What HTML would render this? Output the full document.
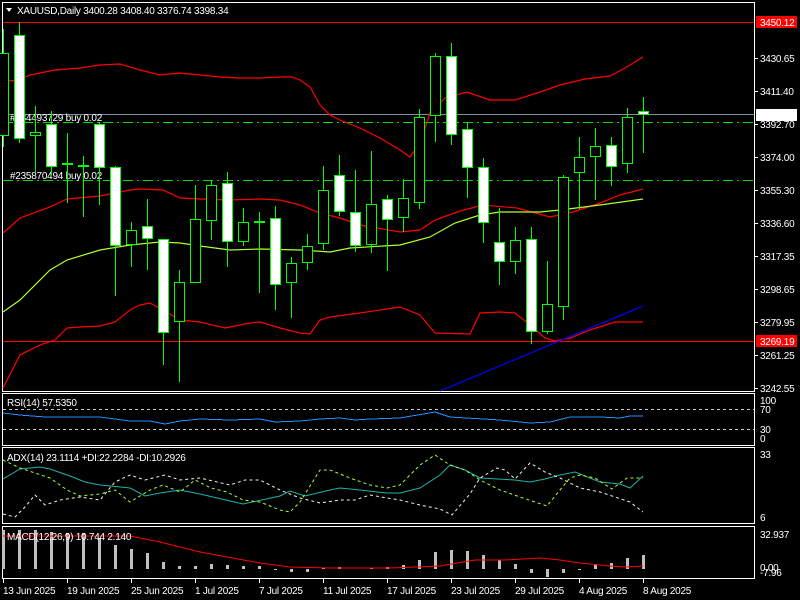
<!DOCTYPE html>
<html><head><meta charset="utf-8"><style>
html,body{margin:0;padding:0;background:#000;width:800px;height:600px;overflow:hidden}
svg{display:block}
text{font-family:"Liberation Sans",sans-serif;font-size:10px;letter-spacing:-0.25px;fill:#fff}
</style></head><body>
<svg width="800" height="600" viewBox="0 0 800 600" xmlns="http://www.w3.org/2000/svg" shape-rendering="crispEdges">
<rect width="800" height="600" fill="#000"/>
<g fill="none" stroke="#fff" stroke-width="1">
<rect x="2.5" y="2.5" width="752" height="389"/>
<rect x="2.5" y="393.5" width="752" height="52"/>
<rect x="2.5" y="447.5" width="752" height="76"/>
<rect x="2.5" y="526.5" width="752" height="52"/>
</g>
<line x1="3" y1="22.5" x2="754" y2="22.5" stroke="#ff0000"/>
<line x1="3" y1="341.5" x2="754" y2="341.5" stroke="#ff0000"/>
<line x1="3" y1="114.5" x2="754" y2="114.5" stroke="#8090a0"/>
<line x1="3" y1="122.5" x2="754" y2="122.5" stroke="#00e000" stroke-dasharray="10,4,2,4"/>
<line x1="3" y1="180.5" x2="754" y2="180.5" stroke="#00e000" stroke-dasharray="10,4,2,4"/>
<text x="10" y="121" fill="#ddd">#234493729 buy 0.02</text>
<text x="10" y="179" fill="#ddd">#235870494 buy 0.02</text>
<g fill="none" shape-rendering="auto" stroke-width="1.2">
<polyline stroke="#ff0000" points="3,80 15,81 30,75 55,70 80,68 100,65 120,64 140,70 160,75 180,73 200,75 220,77 240,78 260,78 280,77 292,77 300,80 310,87 320,105 330,115 340,120 360,128 380,138 400,150 410,157 420,143 430,113 445,98 467,92 490,100 515,100 540,92 560,85 585,79 610,76 625,68 643,57"/>
<polyline stroke="#ff0000" points="3,233 20,218 50,207 67,199 100,196 130,190 140,189 163,190 180,198 200,199 230,200 260,199 280,200 300,205 320,213 340,218 360,225 400,232 420,230 435,220 460,211 483,205 517,208 550,217 573,212 600,203 620,195 643,189"/>
<polyline stroke="#adff2f" points="3,312 20,300 50,270 67,260 100,250 130,245 160,242 180,243 200,246 230,250 260,249 300,250 330,252 350,248 400,245 430,237 455,223 480,215 500,212 540,212 560,210 600,205 643,199"/>
<polyline stroke="#ff0000" points="3,388 20,355 40,345 55,340 67,328 80,327 100,326 115,322 130,310 140,305 150,303 163,310 180,320 200,322 225,328 250,323 260,322 280,328 300,333 310,334 320,320 330,317 360,313 400,307 420,315 435,333 470,334 480,313 500,312 515,313 530,325 545,338 555,341 570,338 590,330 615,322 643,322"/>
<line x1="440" y1="391" x2="643" y2="306" stroke="#0000ff"/>
</g>
<g stroke="#00ff00" stroke-width="1">
<line x1="3.5" y1="29" x2="3.5" y2="147"/><rect x="-1.5" y="53.5" width="10" height="82" fill="#000"/>
<line x1="19.5" y1="22" x2="19.5" y2="143"/><rect x="14.5" y="35.5" width="10" height="103" fill="#fff"/>
<line x1="35.5" y1="106" x2="35.5" y2="172"/><rect x="30.5" y="132.5" width="10" height="3" fill="#000"/>
<line x1="51.5" y1="111" x2="51.5" y2="175"/><rect x="46.5" y="124.5" width="10" height="42" fill="#fff"/>
<line x1="67.5" y1="133" x2="67.5" y2="203"/><rect x="62.5" y="163.5" width="10" height="1" fill="#fff"/>
<line x1="83.5" y1="156" x2="83.5" y2="217"/><rect x="78.5" y="165.5" width="10" height="1" fill="#fff"/>
<line x1="99.5" y1="122" x2="99.5" y2="205"/><rect x="94.5" y="124.5" width="10" height="43" fill="#fff"/>
<line x1="115.5" y1="166" x2="115.5" y2="296"/><rect x="110.5" y="167.5" width="10" height="78" fill="#fff"/>
<line x1="131.5" y1="222" x2="131.5" y2="267"/><rect x="126.5" y="230.5" width="10" height="14" fill="#000"/>
<line x1="147.5" y1="199" x2="147.5" y2="270"/><rect x="142.5" y="226.5" width="10" height="12" fill="#fff"/>
<line x1="163.5" y1="239" x2="163.5" y2="365"/><rect x="158.5" y="239.5" width="10" height="93" fill="#fff"/>
<line x1="179.5" y1="270" x2="179.5" y2="382"/><rect x="174.5" y="282.5" width="10" height="39" fill="#000"/>
<line x1="195.5" y1="185" x2="195.5" y2="283"/><rect x="190.5" y="219.5" width="10" height="63" fill="#000"/>
<line x1="211.5" y1="180" x2="211.5" y2="240"/><rect x="206.5" y="185.5" width="10" height="35" fill="#000"/>
<line x1="227.5" y1="172" x2="227.5" y2="267"/><rect x="222.5" y="183.5" width="10" height="58" fill="#fff"/>
<line x1="243.5" y1="208" x2="243.5" y2="246"/><rect x="238.5" y="222.5" width="10" height="19" fill="#000"/>
<line x1="259.5" y1="212" x2="259.5" y2="293"/><rect x="254.5" y="221.5" width="10" height="1" fill="#fff"/>
<line x1="275.5" y1="206" x2="275.5" y2="310"/><rect x="270.5" y="218.5" width="10" height="66" fill="#fff"/>
<line x1="291.5" y1="257" x2="291.5" y2="318"/><rect x="286.5" y="263.5" width="10" height="19" fill="#000"/>
<line x1="307.5" y1="234" x2="307.5" y2="270"/><rect x="302.5" y="246.5" width="10" height="16" fill="#000"/>
<line x1="323.5" y1="166" x2="323.5" y2="250"/><rect x="318.5" y="190.5" width="10" height="53" fill="#000"/>
<line x1="339.5" y1="155" x2="339.5" y2="216"/><rect x="334.5" y="175.5" width="10" height="36" fill="#fff"/>
<line x1="355.5" y1="170" x2="355.5" y2="252"/><rect x="350.5" y="212.5" width="10" height="33" fill="#fff"/>
<line x1="371.5" y1="151" x2="371.5" y2="253"/><rect x="366.5" y="204.5" width="10" height="40" fill="#000"/>
<line x1="387.5" y1="195" x2="387.5" y2="271"/><rect x="382.5" y="199.5" width="10" height="20" fill="#fff"/>
<line x1="403.5" y1="179" x2="403.5" y2="232"/><rect x="398.5" y="198.5" width="10" height="19" fill="#000"/>
<line x1="419.5" y1="109" x2="419.5" y2="209"/><rect x="414.5" y="117.5" width="10" height="85" fill="#000"/>
<line x1="435.5" y1="53" x2="435.5" y2="142"/><rect x="430.5" y="56.5" width="10" height="59" fill="#000"/>
<line x1="451.5" y1="43" x2="451.5" y2="145"/><rect x="446.5" y="56.5" width="10" height="78" fill="#fff"/>
<line x1="467.5" y1="123" x2="467.5" y2="198"/><rect x="462.5" y="129.5" width="10" height="38" fill="#fff"/>
<line x1="483.5" y1="158" x2="483.5" y2="243"/><rect x="478.5" y="167.5" width="10" height="55" fill="#fff"/>
<line x1="499.5" y1="208" x2="499.5" y2="285"/><rect x="494.5" y="242.5" width="10" height="19" fill="#fff"/>
<line x1="515.5" y1="227" x2="515.5" y2="274"/><rect x="510.5" y="240.5" width="10" height="21" fill="#000"/>
<line x1="531.5" y1="227" x2="531.5" y2="344"/><rect x="526.5" y="239.5" width="10" height="92" fill="#fff"/>
<line x1="547.5" y1="261" x2="547.5" y2="334"/><rect x="542.5" y="304.5" width="10" height="27" fill="#000"/>
<line x1="563.5" y1="175" x2="563.5" y2="320"/><rect x="558.5" y="177.5" width="10" height="129" fill="#000"/>
<line x1="579.5" y1="137" x2="579.5" y2="209"/><rect x="574.5" y="157.5" width="10" height="15" fill="#000"/>
<line x1="595.5" y1="128" x2="595.5" y2="200"/><rect x="590.5" y="146.5" width="10" height="10" fill="#000"/>
<line x1="611.5" y1="137" x2="611.5" y2="186"/><rect x="606.5" y="145.5" width="10" height="21" fill="#fff"/>
<line x1="627.5" y1="108" x2="627.5" y2="173"/><rect x="622.5" y="117.5" width="10" height="46" fill="#000"/>
<line x1="643.5" y1="97" x2="643.5" y2="153"/><rect x="638.5" y="111.5" width="10" height="3" fill="#fff"/>
</g>
<polygon points="6,8 12,8 9,12" fill="#fff"/>
<text x="17" y="14">XAUUSD,Daily  3400.28 3408.40 3376.74 3398.34</text>
<g stroke="#fff"><line x1="755" y1="58.5" x2="758" y2="58.5"/><line x1="755" y1="91.5" x2="758" y2="91.5"/><line x1="755" y1="124.5" x2="758" y2="124.5"/><line x1="755" y1="157.5" x2="758" y2="157.5"/><line x1="755" y1="190.5" x2="758" y2="190.5"/><line x1="755" y1="223.5" x2="758" y2="223.5"/><line x1="755" y1="256.5" x2="758" y2="256.5"/><line x1="755" y1="289.5" x2="758" y2="289.5"/><line x1="755" y1="322.5" x2="758" y2="322.5"/><line x1="755" y1="355.5" x2="758" y2="355.5"/><line x1="755" y1="388.5" x2="758" y2="388.5"/></g>
<text x="760" y="62">3430.65</text><text x="760" y="95">3411.40</text><text x="760" y="128">3392.70</text><text x="760" y="161">3374.00</text><text x="760" y="194">3355.30</text><text x="760" y="227">3336.60</text><text x="760" y="260">3317.35</text><text x="760" y="293">3298.65</text><text x="760" y="326">3279.95</text><text x="760" y="359">3261.25</text><text x="760" y="392">3242.55</text>
<rect x="756" y="16" width="41" height="12" fill="#ff0000"/><text x="760" y="26" fill="#300">3450.12</text>
<rect x="756" y="109" width="41" height="12" fill="#fff"/><text x="760" y="119" fill="#000">3398.34</text>
<rect x="756" y="335" width="41" height="12" fill="#ff0000"/><text x="760" y="345" fill="#300">3269.19</text>
<text x="7" y="406">RSI(14) 57.5350</text>
<line x1="3" y1="409.5" x2="754" y2="409.5" stroke="#ccc" stroke-dasharray="3,3"/>
<line x1="3" y1="429.5" x2="754" y2="429.5" stroke="#ccc" stroke-dasharray="3,3"/>
<polyline fill="none" stroke="#1e90ff" points="3,413 20,415 45,417 100,417 115,419 130,421 150,421 165,424 180,421 200,419 230,420 260,419 275,422 300,421 320,419 340,418 355,420 370,419 400,418 435,412 450,417 500,420 530,423 550,422 570,417 600,417 620,418 630,416 643,416"/>
<text x="760" y="404">100</text><text x="760" y="413">70</text><text x="760" y="433">30</text><text x="760" y="442">0</text>
<text x="7" y="461">ADX(14) 23.1114 +DI:22.2284 -DI:10.2926</text>
<g fill="none" shape-rendering="auto">
<polyline stroke="#20b2aa" points="3,479 20,469 40,467 50,469 70,476 85,482 100,485 130,488 145,496 160,493 180,490 200,494 243,504 280,496 290,491 305,496 330,490 340,488 360,490 387,493 400,493 420,488 440,475 450,465 465,470 480,478 515,480 530,482 545,479 560,475 575,472 600,482 620,484 630,488 643,476"/>
<polyline stroke="#adff2f" stroke-dasharray="3,3" points="3,460 20,468 50,478 67,490 80,496 100,494 115,490 130,502 150,490 163,485 180,492 195,480 211,488 227,492 243,500 260,502 280,510 290,512 300,502 320,470 330,470 350,478 370,485 387,488 400,485 420,465 435,455 450,465 465,470 480,480 500,490 520,497 547,506 560,490 570,478 580,475 595,478 612,489 627,478 643,478"/>
<polyline stroke="#f5f5dc" stroke-dasharray="3,3" points="3,514 15,517 25,507 35,495 45,505 60,500 80,497 100,500 115,482 130,475 145,480 165,475 180,480 200,478 230,485 245,480 260,480 280,490 300,498 320,503 340,500 355,500 370,495 387,498 400,500 420,505 440,509 452,515 470,494 480,478 497,468 505,470 515,479 530,463 545,472 560,478 580,488 600,492 630,502 643,512"/>
</g>
<text x="760" y="458">33</text><text x="760" y="521">6</text>
<g fill="#c0c0c0">
<rect x="2" y="530" width="3" height="39"/><rect x="18" y="530" width="3" height="39"/><rect x="34" y="530" width="3" height="39"/><rect x="50" y="532" width="3" height="37"/><rect x="66" y="533" width="3" height="36"/><rect x="82" y="533" width="3" height="36"/><rect x="98" y="538" width="3" height="31"/><rect x="114" y="545" width="3" height="24"/><rect x="130" y="549" width="3" height="20"/><rect x="146" y="553" width="3" height="16"/><rect x="162" y="562" width="3" height="7"/><rect x="178" y="566" width="3" height="3"/><rect x="194" y="566" width="3" height="3"/><rect x="210" y="564" width="3" height="5"/><rect x="226" y="565" width="3" height="4"/><rect x="242" y="566" width="3" height="3"/><rect x="258" y="566" width="3" height="3"/><rect x="274" y="569" width="3" height="1"/><rect x="290" y="569" width="3" height="3"/><rect x="306" y="569" width="3" height="3"/><rect x="322" y="568" width="3" height="1"/><rect x="338" y="567" width="3" height="2"/><rect x="370" y="568" width="3" height="1"/><rect x="386" y="567" width="3" height="2"/>
<rect x="402" y="565" width="3" height="4"/><rect x="418" y="560" width="3" height="9"/><rect x="434" y="552" width="3" height="17"/><rect x="450" y="550" width="3" height="19"/><rect x="466" y="551" width="3" height="18"/><rect x="482" y="555" width="3" height="14"/><rect x="498" y="560" width="3" height="9"/><rect x="514" y="564" width="3" height="5"/><rect x="530" y="569" width="3" height="4"/><rect x="546" y="569" width="3" height="8"/><rect x="562" y="569" width="3" height="4"/><rect x="578" y="569" width="3" height="1"/><rect x="594" y="564" width="3" height="5"/><rect x="610" y="563" width="3" height="6"/><rect x="626" y="558" width="3" height="11"/><rect x="642" y="555" width="3" height="14"/>
</g>
<polyline fill="none" stroke="#ff0000" shape-rendering="auto" points="3,536 130,536 160,542 200,552 260,563 290,567 330,568 390,568 440,566 475,560 505,560 540,558 560,560 580,563 610,566 625,567 643,566"/>
<text x="7" y="540">MACD(12,26,9) 10.744 2.140</text>
<text x="760" y="538">32.937</text><text x="760" y="571">0.00</text><text x="760" y="576">-7.96</text>
<g stroke="#fff"><line x1="3.5" y1="579" x2="3.5" y2="583"/><line x1="67.5" y1="579" x2="67.5" y2="583"/><line x1="131.5" y1="579" x2="131.5" y2="583"/><line x1="195.5" y1="579" x2="195.5" y2="583"/><line x1="259.5" y1="579" x2="259.5" y2="583"/><line x1="323.5" y1="579" x2="323.5" y2="583"/><line x1="387.5" y1="579" x2="387.5" y2="583"/><line x1="451.5" y1="579" x2="451.5" y2="583"/><line x1="515.5" y1="579" x2="515.5" y2="583"/><line x1="579.5" y1="579" x2="579.5" y2="583"/><line x1="643.5" y1="579" x2="643.5" y2="583"/></g>
<text x="3" y="594">13 Jun 2025</text><text x="67" y="594">19 Jun 2025</text><text x="131" y="594">25 Jun 2025</text><text x="195" y="594">1 Jul 2025</text><text x="259" y="594">7 Jul 2025</text><text x="323" y="594">11 Jul 2025</text><text x="387" y="594">17 Jul 2025</text><text x="451" y="594">23 Jul 2025</text><text x="515" y="594">29 Jul 2025</text><text x="579" y="594">4 Aug 2025</text><text x="643" y="594">8 Aug 2025</text>
</svg>
</body></html>
